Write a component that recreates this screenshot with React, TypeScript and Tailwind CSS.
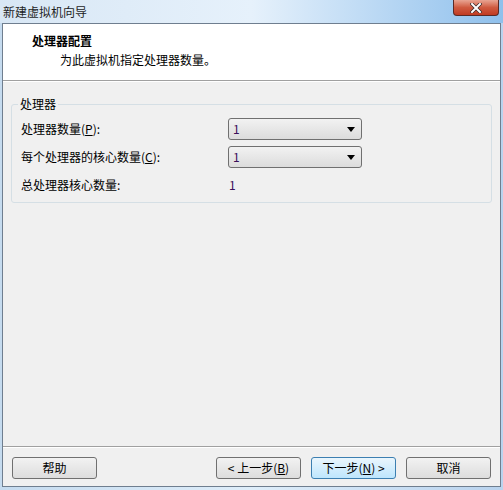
const FONT = { fontFamily: '"Noto Sans CJK SC", "Liberation Sans", sans-serif' }

function Select({ value }: { value: string }) {
  return (
    <div className="flex h-[22px] w-[134px] items-center justify-between rounded-[3px] border border-[#707070] bg-gradient-to-b from-[#f2f2f2] to-[#dcdcdc] pl-[4px] pr-[6px]">
      <span className="text-[12px] text-[#3a0f5a]">{value}</span>
      <svg width="8" height="5" viewBox="0 0 8 5">
        <path d="M0 0 H8 L4 5 Z" fill="#000" />
      </svg>
    </div>
  )
}

function Button({
  children,
  focused,
}: {
  children: React.ReactNode
  focused?: boolean
}) {
  return (
    <button
      type="button"
      className={[
        'flex h-[22px] w-[85px] items-center justify-center rounded-[3px] border bg-gradient-to-b text-[12px] text-black',
        focused
          ? 'border-[#3c7fb1] from-[#eaf6fd] to-[#bee6fd]'
          : 'border-[#707070] from-[#f2f2f2] to-[#dddddd]',
      ].join(' ')}
    >
      {children}
    </button>
  )
}

export default function App() {
  return (
    <div
      style={FONT}
      className="flex h-[490px] w-[503px] flex-col bg-gradient-to-r from-[#c5dbef] via-[#dfeefa] to-[#b9d3ee]"
    >
      <div className="relative flex h-[23px] items-center bg-gradient-to-r from-[#d8e7f5] via-[#e6f1fb] to-[#8fc0ec] pl-[3px]">
        <span className="text-[12px] text-[#1e1e1e]">新建虚拟机向导</span>
        <div className="absolute right-[4px] top-0 flex h-[16px] w-[46px] items-center justify-center rounded-b-[4px] border border-t-0 border-[#5b2a26] bg-gradient-to-b from-[#e8a493] via-[#cf5a40] to-[#c03a22]">
          <svg width="12" height="10" viewBox="0 0 12 10">
            <path
              d="M2 1 L10 9 M10 1 L2 9"
              stroke="#3a2a2a"
              strokeWidth="3.4"
              strokeLinecap="square"
            />
            <path
              d="M2 1 L10 9 M10 1 L2 9"
              stroke="#fff"
              strokeWidth="2"
              strokeLinecap="square"
            />
          </svg>
        </div>
      </div>

      <div className="mx-[2px] mb-[3px] flex flex-1 flex-col border border-[#6f7e8f] bg-[#f0f0f0]">
        <div className="flex h-[57px] flex-col border-b border-[#a0a0a0] bg-white pl-[29px] pt-[8px]">
          <span className="text-[12px] font-bold leading-[18px] text-black">处理器配置</span>
          <span className="pl-[28px] pt-[1px] text-[12px] leading-[18px] text-black">
            为此虚拟机指定处理器数量。
          </span>
        </div>

        <div className="border-t border-white px-[8px] pt-[22px]">
          <div className="relative rounded-[3px] border border-[#d5dfe5] px-[9px] pb-[6px] pt-[13px]">
            <span className="absolute -top-[9px] left-[6px] bg-[#f0f0f0] px-[2px] text-[12px] leading-[16px]">
              处理器
            </span>
            <div className="flex flex-col gap-[6px] text-[12px] text-black">
              <div className="flex items-center">
                <span className="w-[207px]">
                  处理器数量(<span className="underline">P</span>):
                </span>
                <Select value="1" />
              </div>
              <div className="flex items-center">
                <span className="w-[207px]">
                  每个处理器的核心数量(<span className="underline">C</span>):
                </span>
                <Select value="1" />
              </div>
              <div className="flex h-[22px] items-center">
                <span className="w-[207px]">总处理器核心数量:</span>
                <span className="pl-[1px] text-[#3a0f5a]">1</span>
              </div>
            </div>
          </div>
        </div>

        <div className="flex-1" />

        <div className="border-t border-[#a0a0a0]">
          <div className="flex items-center border-t border-white px-[9px] pb-[7px] pt-[9px]">
            <Button>帮助</Button>
            <div className="flex-1" />
            <div className="flex gap-[10px]">
              <Button>
                &lt; 上一步(<span className="underline">B</span>)
              </Button>
              <Button focused>
                下一步(<span className="underline">N</span>) &gt;
              </Button>
              <Button>取消</Button>
            </div>
          </div>
        </div>
      </div>
    </div>
  )
}
